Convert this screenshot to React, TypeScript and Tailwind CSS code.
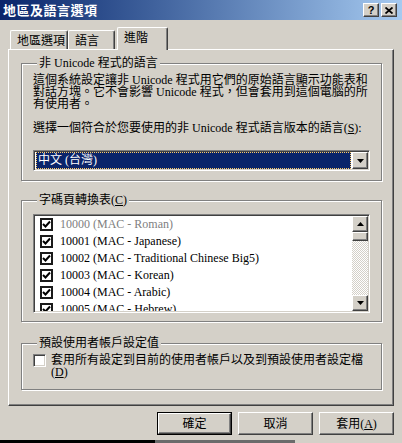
import React from 'react';

const raised =
  'border border-t-white border-l-white border-r-[#404040] border-b-[#404040] shadow-[inset_-1px_-1px_0_#808080] bg-[#d4d0c8]';
const sunken =
  'border border-t-[#808080] border-l-[#808080] border-r-white border-b-white shadow-[inset_1px_1px_0_#404040,inset_-1px_-1px_0_#d4d0c8]';
const etched =
  'border border-[#808080] shadow-[inset_1px_1px_0_#ffffff,1px_1px_0_#ffffff] m-0';

const Arrow: React.FC<{ up?: boolean }> = ({ up }) => (
  <svg width="7" height="4" viewBox="0 0 7 4">
    <polygon points={up ? '0,4 3.5,0 7,4' : '0,0 7,0 3.5,4'} fill="#000" />
  </svg>
);

const Check: React.FC<{ checked?: boolean }> = ({ checked }) => (
  <div className="w-[13px] h-[13px] shrink-0 border-2 border-[#1a1a1a] bg-white flex items-center justify-center">
    {checked && (
      <svg width="9" height="9" viewBox="0 0 9 9">
        <polyline points="1,4 3.5,6.5 8,1.5" fill="none" stroke="#000" strokeWidth="2" />
      </svg>
    )}
  </div>
);

const codePages = [
  { label: '10000 (MAC - Roman)', dim: true },
  { label: '10001 (MAC - Japanese)' },
  { label: '10002 (MAC - Traditional Chinese Big5)' },
  { label: '10003 (MAC - Korean)' },
  { label: '10004 (MAC - Arabic)' },
  { label: '10005 (MAC - Hebrew)' },
];

const Tab: React.FC<{ label: string; active?: boolean; width: string }> = ({ label, active, width }) =>
  active ? (
    <div
      className={`${width} h-[23px] -mb-[1px] ml-[2px] relative z-10 bg-[#d4d0c8] border-t border-l border-t-white border-l-white border-r border-r-[#404040] shadow-[inset_-1px_0_0_#808080] rounded-t-[2px] pl-[6px] pt-[4px] leading-[12px]`}
    >
      {label}
    </div>
  ) : (
    <div
      className={`${width} h-[19px] border-t border-l border-t-white border-l-white border-r border-r-[#404040] shadow-[inset_-1px_0_0_#808080] rounded-t-[2px] pl-[6px] pt-[4px] leading-[12px]`}
    >
      {label}
    </div>
  );

export default function App() {
  return (
    <div className="w-[402px] h-[443px] overflow-hidden bg-[#d4d0c8] flex flex-col text-[12px] text-black font-[family-name:Liberation_Serif,Noto_Sans_CJK_TC,serif]">
      {/* title bar */}
      <div className="h-[20px] shrink-0 bg-linear-to-r from-[#0a246a] to-[#a6caf0] flex items-center justify-between pl-[3px] pr-[5px]">
        <span className="text-white font-bold text-[13px] leading-[14px] tracking-[0.5px] font-[family-name:Noto_Sans_CJK_TC,sans-serif]">
          地區及語言選項
        </span>
        <div className="flex gap-[2px]">
          <div className={`${raised} w-[16px] h-[14px] flex items-center justify-center`}>
            <span className="font-bold text-[11px] leading-[11px] font-[family-name:Liberation_Sans,sans-serif]">?</span>
          </div>
          <div className={`${raised} w-[16px] h-[14px] flex items-center justify-center`}>
            <svg width="8" height="7" viewBox="0 0 8 7">
              <path d="M0.5 0.5 L7.5 6.5 M7.5 0.5 L0.5 6.5" stroke="#000" strokeWidth="1.8" />
            </svg>
          </div>
        </div>
      </div>

      {/* tabs */}
      <div className="h-[22px] mt-[7px] pl-[10px] flex items-end">
        <Tab label="地區選項" width="w-[58px]" />
        <Tab label="語言" width="w-[47px]" />
        <Tab label="進階" width="w-[51px]" active />
      </div>

      {/* panel */}
      <div className="ml-[8px] w-[386px] h-[357px] shrink-0 border border-t-white border-l-white border-r-[#404040] border-b-[#404040] shadow-[inset_-1px_-1px_0_#808080] pl-[12px] pr-[11px] pt-[7px] flex flex-col">
        <fieldset className={`${etched} px-[11px] pb-[9px]`}>
          <legend className="ml-[4px] px-[2px] bg-[#d4d0c8] leading-[12px]">非 Unicode 程式的語言</legend>
          <p className="pt-[5px] leading-[12px]">
            這個系統設定讓非 Unicode 程式用它們的原始語言顯示功能表和
            <br />
            對話方塊。它不會影響 Unicode 程式，但會套用到這個電腦的所
            <br />
            有使用者。
          </p>
          <p className="mt-[12px] leading-[12px]">
            選擇一個符合於您要使用的非 Unicode 程式語言版本的語言(<u>S</u>):
          </p>
          <div className={`${sunken} mt-[16px] h-[21px] bg-white flex p-[1px] pl-[2px]`}>
            <div className="flex-1 bg-[#0a246a] text-white outline outline-1 outline-dotted outline-[#ffcc66] -outline-offset-1 pl-[2px] leading-[17px] mr-[1px]">
              中文 (台灣)
            </div>
            <div className={`${raised} w-[16px] h-[17px] flex items-center justify-center`}>
              <Arrow />
            </div>
          </div>
        </fieldset>

        <fieldset className={`${etched} mt-[13px] px-[11px] pb-[8px]`}>
          <legend className="ml-[4px] px-[2px] bg-[#d4d0c8] leading-[12px]">
            字碼頁轉換表(<u>C</u>)
          </legend>
          <div className={`${sunken} mt-[8px] h-[99px] bg-white flex p-[1px] overflow-hidden`}>
            <div className="flex-1 overflow-hidden">
              {codePages.map((c) => (
                <div key={c.label} className="h-[17px] flex items-center gap-[7px] pl-[5px]">
                  <Check checked />
                  <span className={`leading-[17px] whitespace-nowrap ${c.dim ? 'text-[#808080]' : ''}`}>{c.label}</span>
                </div>
              ))}
            </div>
            <div className="w-[16px] flex flex-col">
              <div className={`${raised} h-[16px] flex items-center justify-center`}>
                <Arrow up />
              </div>
              <div className={`${raised} h-[9px]`} />
              <div className="flex-1 bg-[image:repeating-conic-gradient(#d4d0c8_0_25%,#ffffff_0_50%)] bg-[length:2px_2px]" />
              <div className={`${raised} h-[16px] flex items-center justify-center`}>
                <Arrow />
              </div>
            </div>
          </div>
        </fieldset>

        <fieldset className={`${etched} mt-[15px] px-[11px] pb-[11px]`}>
          <legend className="ml-[4px] px-[2px] bg-[#d4d0c8] leading-[12px]">預設使用者帳戶設定值</legend>
          <div className="pt-[5px] flex gap-[5px]">
            <div className={`${sunken} w-[13px] h-[13px] bg-white shrink-0`} />
            <p className="leading-[12px]">
              套用所有設定到目前的使用者帳戶以及到預設使用者設定檔
              <br />
              (<u>D</u>)
            </p>
          </div>
        </fieldset>
      </div>

      {/* buttons */}
      <div className="mt-[6px] pr-[8px] flex justify-end gap-[6px]">
        <div className="w-[75px] h-[23px] border border-black">
          <div className={`${raised} h-full flex items-center justify-center leading-[12px]`}>確定</div>
        </div>
        <div className={`${raised} w-[75px] h-[23px] flex items-center justify-center leading-[12px]`}>取消</div>
        <div className={`${raised} w-[75px] h-[23px] flex items-center justify-center leading-[12px]`}>
          套用(<u>A</u>)
        </div>
      </div>

      <div className="mt-[5px] flex">
        <div className="w-[155px] h-[3px] bg-black" />
        <div className="w-[140px] h-[3px] bg-[#6b6b6b]" />
      </div>
    </div>
  );
}
